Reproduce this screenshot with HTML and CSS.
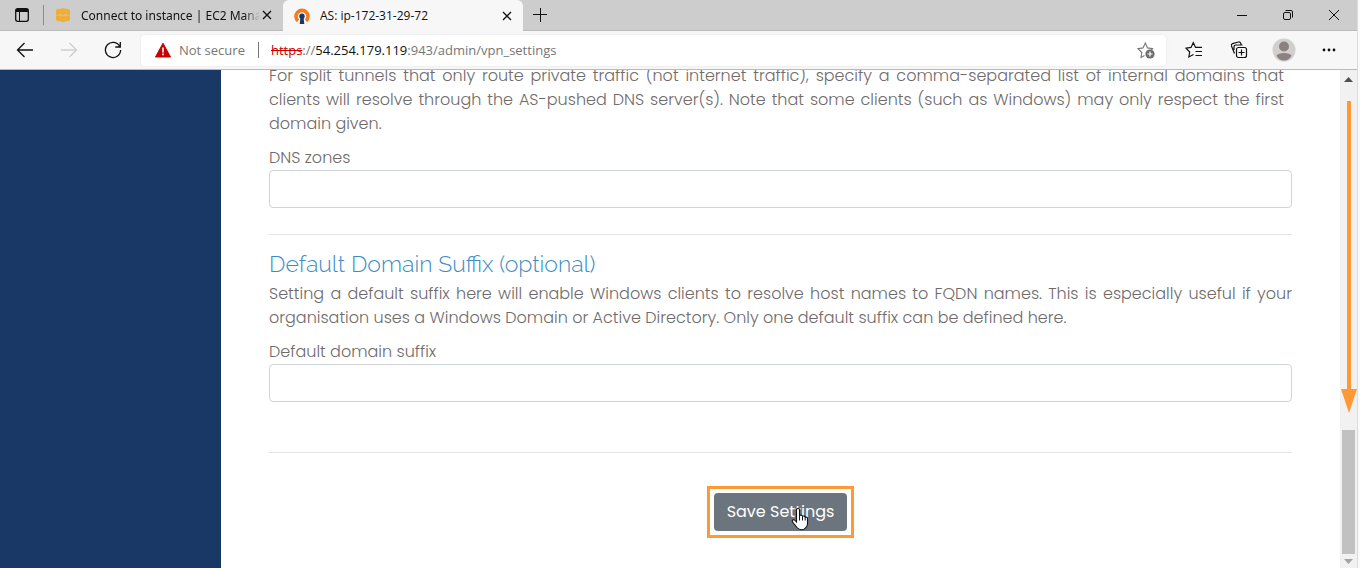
FILE: index.html
```html
<!DOCTYPE html>
<html lang="en">
    <head>
        <meta charset="utf-8">
        <meta name="viewport" content="width=device-width, initial-scale=1">
        <title>AS: ip-172-31-29-72</title>
        <link rel="stylesheet" href="styles.css">
    </head>
    <body>
        <div class="window">
            <header class="tabs">
                <button class="icon-btn tab-menu" aria-label="Tab actions">
                    <svg width="16" height="16" viewBox="0 0 16 16"><rect x="1.7" y="1.7" width="12.6" height="12.6" rx="2" fill="none" stroke="#111" stroke-width="1.3"/><path d="M2 2h12v3H2z" fill="#111"/><path d="M5.500 5v9" stroke="#111"/></svg>
                </button>
                <div class="tab">
                    <svg width="16" height="16" viewBox="0 0 16 16"><path d="M1 3l3-1.500v13L1 13zM15 3l-3-1.500v13l3-1.500z" fill="#f0ad32"/><path d="M4 2.200L8 1l4 1.200v5L8 8 4 7.200zM4 9l4-.5 4 .5v5L8 15.200 4 14z" fill="#eeae38"/><path d="M1 8.200l7 .5 7-.5" stroke="#d9c091" fill="none"/></svg>
                    <span class="tab-title">Connect to instance | EC2 Manag</span>
                    <button class="icon-btn" aria-label="Close tab">
                        <svg width="10" height="10" viewBox="0 0 10 10"><path d="M1 1l8 8M9 1L1 9" stroke="#111" stroke-width="1.3"/></svg>
                    </button>
                </div>
                <div class="tab active">
                    <svg width="16" height="16" viewBox="0 0 16 16"><path d="M4 12.800A6 6 0 1 1 12 12.800" fill="none" stroke="#f47b20" stroke-width="3.600"/><circle cx="8" cy="8.200" r="2.700" fill="#1a3764"/><path d="M6.500 9h3l.8 7H5.700z" fill="#1a3764"/></svg>
                    <span class="tab-title">AS: ip-172-31-29-72</span>
                    <button class="icon-btn" aria-label="Close tab">
                        <svg width="10" height="10" viewBox="0 0 10 10"><path d="M1 1l8 8M9 1L1 9" stroke="#111" stroke-width="1.3"/></svg>
                    </button>
                </div>
                <button class="icon-btn new-tab" aria-label="New tab">
                    <svg width="14" height="14" viewBox="0 0 14 14"><path d="M0 6.500h14M7.500 0v14" stroke="#111"/></svg>
                </button>
                <div class="controls">
                    <button class="icon-btn" aria-label="Minimize">
                        <svg width="12" height="12" viewBox="0 0 12 12"><path d="M1 6.500h10" stroke="#111"/></svg>
                    </button>
                    <button class="icon-btn" aria-label="Restore">
                        <svg width="12" height="12" viewBox="0 0 12 12" fill="none" stroke="#111"><rect x="1.500" y="3.500" width="7" height="7" rx="1.500"/><path d="M3.500 1.500H9a1.500 1.500 0 0 1 1.500 1.500v5.500"/></svg>
                    </button>
                    <button class="icon-btn" aria-label="Close">
                        <svg width="12" height="12" viewBox="0 0 12 12"><path d="M1 1l10 10M11 1L1 11" stroke="#111"/></svg>
                    </button>
                </div>
            </header>

            <nav class="toolbar">
                <button class="icon-btn" aria-label="Back">
                    <svg width="18" height="16" viewBox="0 0 18 16" fill="none" stroke="#111" stroke-width="1.3"><path d="M17 8H1.500M8.500 1l-7 7 7 7"/></svg>
                </button>
                <button class="icon-btn" aria-label="Forward" disabled>
                    <svg width="18" height="16" viewBox="0 0 18 16" fill="none" stroke="#cfcfcf" stroke-width="1.300"><path d="M1 8h15.500M9.500 1l7 7-7 7"/></svg>
                </button>
                <button class="icon-btn" aria-label="Refresh">
                    <svg width="18" height="18" viewBox="0 0 18 18" fill="none" stroke="#111" stroke-width="1.300"><path d="M15.800 5.500A7.600 7.600 0 1 0 16.600 9M16.300 1v5h-5"/></svg>
                </button>
                <div class="address">
                    <svg width="18" height="16" viewBox="0 0 18 16"><path d="M9 1.200L16.500 15h-15z" fill="#c80000" stroke="#c80000" stroke-linejoin="round"/><path d="M9 5.500v5M9 11.500v1.800" stroke="#fff" stroke-width="1.600"/></svg>
                    <span class="security">Not secure</span>
                    <span class="url" role="textbox" aria-label="Address" contenteditable="true"><s>https</s>://<b>54.254.179.119</b>:943/admin/vpn_settings</span>
                    <button class="icon-btn" aria-label="Add to favorites">
                        <svg width="18" height="18" viewBox="0 0 18 18"><path d="M7.500 14.500L4 16.500l.8-5L1 7.700l5-.8L8.300 2l2.300 4.900 5 .8-1.500 1.500" fill="none" stroke="#777" stroke-width="1.100"/><circle cx="13" cy="13" r="4.600" fill="#6b6b6b"/><path d="M10.500 13h5M13 10.500v5" stroke="#fff" stroke-width="1.200"/></svg>
                    </button>
                </div>
                <div class="actions">
                    <button class="icon-btn" aria-label="Favorites">
                        <svg width="18" height="18" viewBox="0 0 18 18" fill="none" stroke="#111" stroke-width="1.200"><path d="M8.500 13.500L3.800 16l.9-5L1 7.200l5-.8 2.300-4.700 2.300 4.700H17M10.500 10.500H17M10.500 14.500H17"/></svg>
                    </button>
                    <button class="icon-btn" aria-label="Collections">
                        <svg width="18" height="18" viewBox="0 0 18 18" fill="none" stroke="#111" stroke-width="1.200"><rect x="6.500" y="6.500" width="10" height="10" rx="2"/><path d="M8.500 11.500h6M11.500 8.500v6M4.500 12.500L1.500 5q-.5-1.800 1-2.400L8.500 1q1.600-.3 2.200 1.200l.5 1.800M4 9V6q0-2 2-2h6.500"/></svg>
                    </button>
                    <button class="icon-btn" aria-label="Profile">
                        <svg width="24" height="24" viewBox="0 0 24 24"><circle cx="12" cy="12" r="11.500" fill="#d2d0ce"/><circle cx="12" cy="8.500" r="5" fill="#8a8180"/><path d="M4.500 17.500q2-2.500 7.500-2.500t7.500 2.500q-2.500 5-7.500 5t-7.500-5z" fill="#8a8180"/></svg>
                    </button>
                    <button class="icon-btn" aria-label="Settings and more">
                        <svg width="14" height="4" viewBox="0 0 14 4" fill="#111"><circle cx="2" cy="2" r="1.400"/><circle cx="7" cy="2" r="1.400"/><circle cx="12" cy="2" r="1.400"/></svg>
                    </button>
                </div>
            </nav>

            <div class="page">
                <aside class="sidebar"></aside>
                <main class="content">
                    <form class="settings">
                        <p class="note inset">For split tunnels that only route private traffic (not internet traffic), specify a comma-separated list of internal domains that clients will resolve through the AS-pushed DNS server(s). Note that some clients (such as Windows) may only respect the first domain given.</p>
                        <label for="dns-zones">DNS zones</label>
                        <input type="text" id="dns-zones">
                        <hr>
                        <h2>Default Domain Suffix (optional)</h2>
                        <p class="note">Setting a default suffix here will enable Windows clients to resolve host names to FQDN names. This is especially useful if your organisation uses a Windows Domain or Active Directory. Only one default suffix can be defined here.</p>
                        <label for="domain-suffix">Default domain suffix</label>
                        <input type="text" id="domain-suffix">
                        <hr class="last">
                        <div class="highlight">
                            <button type="button" class="save">Save Settings</button>
                            <svg class="pointer" width="20" height="24" viewBox="0 0 20 24"><path d="M6.500 13.500V3q0-1.800 1.500-1.800T9.500 3v5.500q2.500-1 3 .8 2.200-.8 2.700.9 2.300-.4 2.300 1.600v4.700q0 3-2 4.500-1.500 1.700-4 1.700t-4.500-2.200L3 15.500q-1.500-2 .2-2.700 1.300-.3 3.300 2.200z" fill="#fff" stroke="#111" stroke-width="1.100"/><path d="M9.500 8.500v5M12.500 9.300v4.200M15.200 10.200v3.300" stroke="#111" fill="none"/></svg>
                        </div>
                    </form>
                </main>
                <div class="scrollbar">
                    <svg width="9" height="5" viewBox="0 0 9 5"><path d="M0 5l4.500-5L9 5z" fill="#505050"/></svg>
                    <div class="thumb"></div>
                    <svg width="9" height="5" viewBox="0 0 9 5"><path d="M0 0l4.500 5L9 0z" fill="#a3a3a3"/></svg>
                    <svg class="scroll-arrow" width="16" height="312" viewBox="0 0 16 312" fill="#ff9933"><path d="M6 0h4v288H6zM0 288h16L8 312z"/></svg>
                </div>
            </div>
        </div>
    </body>
</html>
```
FILE: styles.css
```css
* {
    box-sizing: border-box;
}

body {
    margin: 0;
    background-color: #fafafa;
    font-family: "Segoe UI", "Open Sans", sans-serif;
    font-size: 12px;
    color: #111;
}

svg {
    display: block;
    flex: none;
}

.window {
    display: flex;
    flex-direction: column;
    height: 100vh;
    margin-right: 2px;
    border-right: 1px solid #dcdcdc;
    background-color: white;
}

.icon-btn {
    display: flex;
    align-items: center;
    justify-content: center;
    padding: 0;
    border: 0;
    background: none;
}

/* tab strip */
.tabs {
    display: flex;
    flex: none;
    height: 31px;
    background-color: #cdcdcd;
    border-bottom: 1px solid #bababa;
}

.tab-menu {
    width: 43px;
}

.tab {
    display: flex;
    align-items: center;
    width: 240px;
    padding: 0 11px;
}

.tab-title {
    flex: 1;
    margin-left: 10px;
    overflow: hidden;
    white-space: nowrap;
}

.tab:not(.active) {
    border-left: 1px solid #8c8c8c;
    border-image: linear-gradient(transparent 18%, #8c8c8c 18%, #8c8c8c 82%, transparent 82%) 1;
    border-width: 0 0 0 1px;
}

.tab:not(.active) .tab-title {
    margin-right: 2px;
    font-family: "Segoe UI", "Noto Sans", sans-serif;
    -webkit-mask-image: linear-gradient(to left, transparent, black 16px);
    mask-image: linear-gradient(to left, transparent, black 16px);
}

.tab.active {
    height: 31px;
    background-color: #f7f7f7;
    border-radius: 6px 6px 0 0;
}

.new-tab {
    width: 34px;
}

.controls {
    display: flex;
    margin-left: auto;
}

.controls .icon-btn {
    width: 46px;
}

/* toolbar */
.toolbar {
    display: flex;
    flex: none;
    align-items: center;
    height: 39px;
    background-color: #f7f7f7;
    border-bottom: 1px solid #bababa;
}

.toolbar > .icon-btn {
    width: 44px;
    height: 30px;
}

.toolbar > .icon-btn:first-child {
    margin-left: 3px;
}

.address {
    display: flex;
    flex: 1;
    align-items: center;
    height: 31px;
    margin-left: 6px;
    padding: 0 11px 0 13px;
    border-radius: 4px;
    background-color: white;
    box-shadow: 0 0 3px #e6e6e6;
    font-size: 13px;
    color: #767676;
}

.security {
    margin: 0 13px 0 7px;
}

.url {
    flex: 1;
    padding-left: 12px;
    border-left: 1px solid #767676;
    line-height: 16px;
}

.url s {
    color: #c80000;
}

.url b {
    font-weight: normal;
    color: #111;
}

.actions {
    display: flex;
    margin: 0 6px 0 5px;
}

.actions .icon-btn {
    width: 45px;
}

/* page */
.page {
    display: flex;
    flex: 1;
    min-height: 0;
}

.sidebar {
    flex: none;
    width: 221px;
    background-color: #1a3866;
}

/* pinned to the end of the form, the top runs out of view */
.content {
    display: flex;
    flex: 1;
    flex-direction: column;
    justify-content: flex-end;
    overflow: hidden;
    padding: 0 48px 30px;
    font-family: Poppins, Inter, sans-serif;
    font-size: 16px;
    font-weight: 300;
    line-height: 24px;
    color: #6f6b6b;
}

.note {
    margin: 0 0 10px;
    text-align: justify;
}

.inset {
    padding-right: 8px;
}

.settings label {
    display: block;
}

.settings input {
    display: block;
    width: 100%;
    height: 38px;
    padding: 6px 12px;
    border: 1px solid #ced4da;
    border-radius: 4px;
    background-color: white;
    font: inherit;
}

hr {
    margin: 26px 0 16px;
    border: 0;
    border-top: 1px solid #e4e4e4;
}

hr.last {
    margin: 50px 0 33px;
}

h2 {
    margin: 0 0 6px;
    font-family: Raleway, Lato, sans-serif;
    font-size: 23px;
    font-weight: 300;
    line-height: 25px;
    color: #3c8dc5;
}

.highlight {
    position: relative;
    width: fit-content;
    margin: 0 auto;
    padding: 4px;
    border: 3px solid #ff9933;
}

.save {
    display: block;
    height: 38px;
    padding: 0 13px;
    border: 0;
    border-radius: 4px;
    background-color: #6c757d;
    font: inherit;
    font-weight: 400;
    color: white;
}

.pointer {
    position: absolute;
    left: 80px;
    top: 18px;
}

.scrollbar {
    position: relative;
    display: flex;
    flex: none;
    flex-direction: column;
    align-items: center;
    width: 17px;
    padding: 7px 0 4px;
    background-color: #f1f1f1;
}

.thumb {
    width: 13px;
    height: 124px;
    margin: auto 0 5px;
    background-color: #c1c1c1;
}

.scroll-arrow {
    position: absolute;
    left: 1px;
    top: 31px;
}
```
